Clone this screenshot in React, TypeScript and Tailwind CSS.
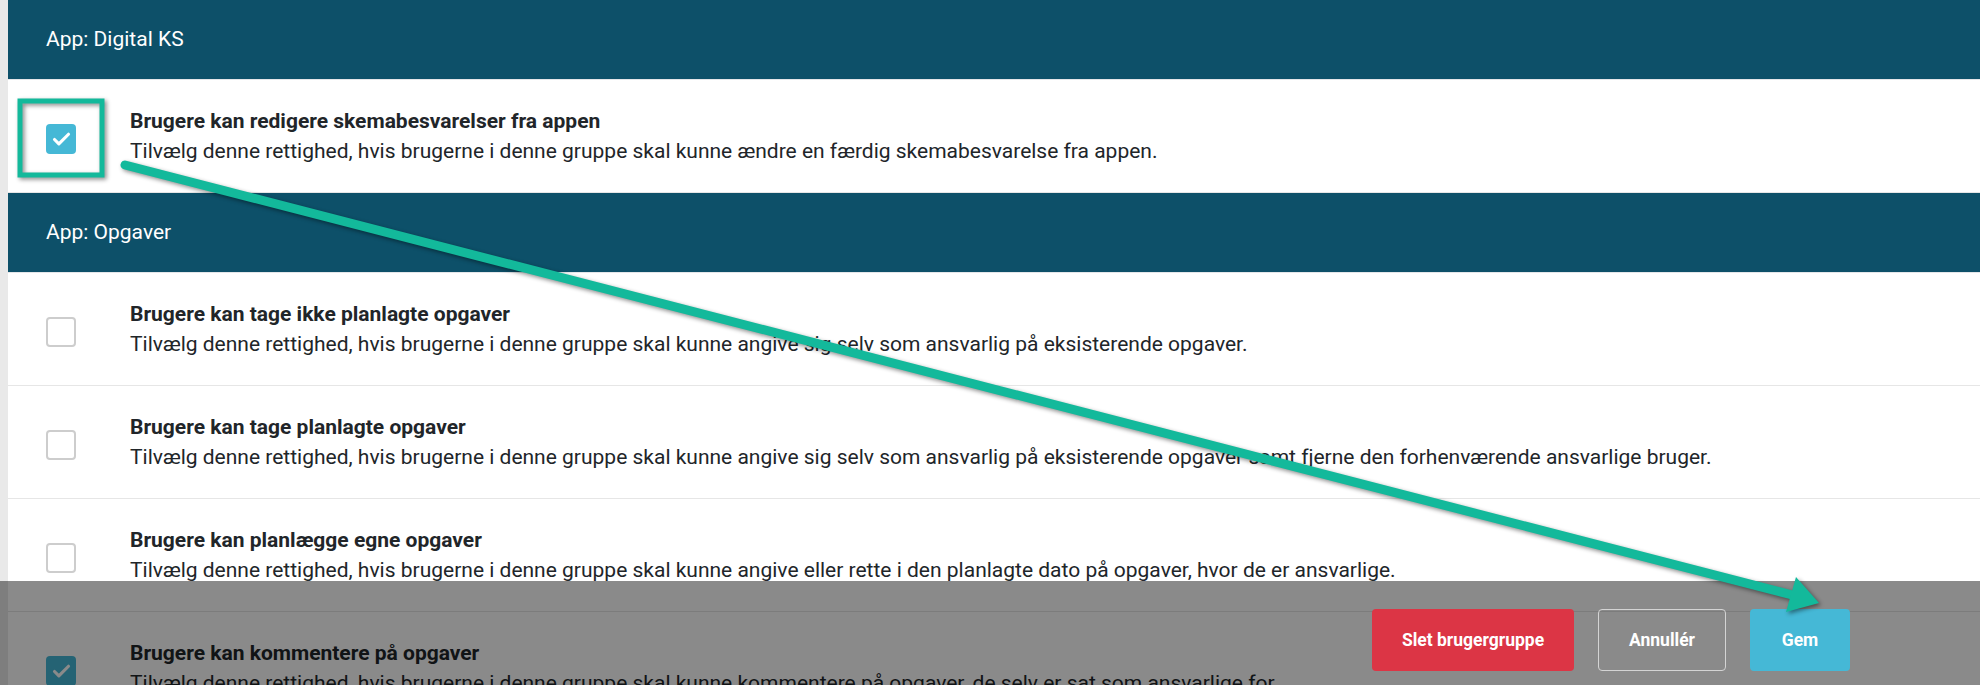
import { Check } from 'lucide-react'

type Permission = {
  title: string
  description: string
  checked: boolean
}

type Section = {
  name: string
  permissions: Permission[]
}

const sections: Section[] = [
  {
    name: 'App: Digital KS',
    permissions: [
      {
        title: 'Brugere kan redigere skemabesvarelser fra appen',
        description: 'Tilvælg denne rettighed, hvis brugerne i denne gruppe skal kunne ændre en færdig skemabesvarelse fra appen.',
        checked: true,
      },
    ],
  },
  {
    name: 'App: Opgaver',
    permissions: [
      {
        title: 'Brugere kan tage ikke planlagte opgaver',
        description:
          'Tilvælg denne rettighed, hvis brugerne i denne gruppe skal kunne angive sig selv som ansvarlig på eksisterende opgaver.',
        checked: false,
      },
      {
        title: 'Brugere kan tage planlagte opgaver',
        description:
          'Tilvælg denne rettighed, hvis brugerne i denne gruppe skal kunne angive sig selv som ansvarlig på eksisterende opgaver samt fjerne den forhenværende ansvarlige bruger.',
        checked: false,
      },
      {
        title: 'Brugere kan planlægge egne opgaver',
        description:
          'Tilvælg denne rettighed, hvis brugerne i denne gruppe skal kunne angive eller rette i den planlagte dato på opgaver, hvor de er ansvarlige.',
        checked: false,
      },
      {
        title: 'Brugere kan kommentere på opgaver',
        description:
          'Tilvælg denne rettighed, hvis brugerne i denne gruppe skal kunne kommentere på opgaver, de selv er sat som ansvarlige for.',
        checked: true,
      },
    ],
  },
]

function Checkbox({ checked }: { checked: boolean }) {
  if (checked) {
    return (
      <div className="mt-[6px] flex h-[30px] w-[30px] shrink-0 items-center justify-center rounded-[4px] bg-[#45b8d6]">
        <Check className="h-[21px] w-[21px] text-white" strokeWidth={3.6} />
      </div>
    )
  }
  return <div className="mt-[6px] h-[30px] w-[30px] shrink-0 rounded-[4px] border-2 border-[#cdcdcd] bg-white" />
}

function PermissionRow({ permission }: { permission: Permission }) {
  return (
    <div className="flex h-[113px] items-center gap-[54px] border-b border-[#e6e6e6] px-[38px]">
      <Checkbox checked={permission.checked} />
      <div className="flex flex-col whitespace-nowrap text-[#212529]">
        <span className="text-[21px] leading-[29px] font-bold">{permission.title}</span>
        <span className="text-[21px] leading-[30px]">{permission.description}</span>
      </div>
    </div>
  )
}

function Annotation() {
  return (
    <svg
      className="pointer-events-none absolute top-0 left-0 z-20 drop-shadow-[2px_2px_2px_rgba(0,0,0,0.45)]"
      width="1980"
      height="685"
      viewBox="0 0 1980 685"
    >
      <rect x="20" y="101" width="82" height="74" fill="none" stroke="#13b99b" strokeWidth="5" />
      <line x1="125" y1="165" x2="1800" y2="597" stroke="#13b99b" strokeWidth="9" strokeLinecap="round" />
      <polygon points="1819,603 1796,577 1786,612" fill="#13b99b" />
    </svg>
  )
}

function App() {
  return (
    <div className="relative h-[685px] w-full overflow-hidden bg-[#e9e9e9] pl-2 font-['Roboto',sans-serif]">
      <div className="bg-white">
        {sections.map((section) => (
          <div key={section.name}>
            <div className="flex h-[80px] items-center border-b border-[#e4e6e9] bg-[#0d5069] px-[38px] text-[21px] text-white">
              {section.name}
            </div>
            {section.permissions.map((permission) => (
              <PermissionRow key={permission.title} permission={permission} />
            ))}
          </div>
        ))}
      </div>

      <div className="absolute right-0 bottom-0 left-0 z-10 h-[104px] bg-black/[0.46]">
        <div className="flex justify-end gap-[24px] pt-[28px] pr-[130px]">
          <button
            type="button"
            className="h-[62px] w-[202px] rounded-[4px] bg-[#dc3545] text-[17.5px] font-bold text-white"
          >
            Slet brugergruppe
          </button>
          <button
            type="button"
            className="h-[62px] w-[128px] rounded-[4px] border border-[#d4d4d4] text-[17.5px] font-bold text-white"
          >
            Annullér
          </button>
          <button type="button" className="h-[62px] w-[100px] rounded-[4px] bg-[#45b8d6] text-[17.5px] font-bold text-white">
            Gem
          </button>
        </div>
      </div>

      <Annotation />
    </div>
  )
}

export default App
